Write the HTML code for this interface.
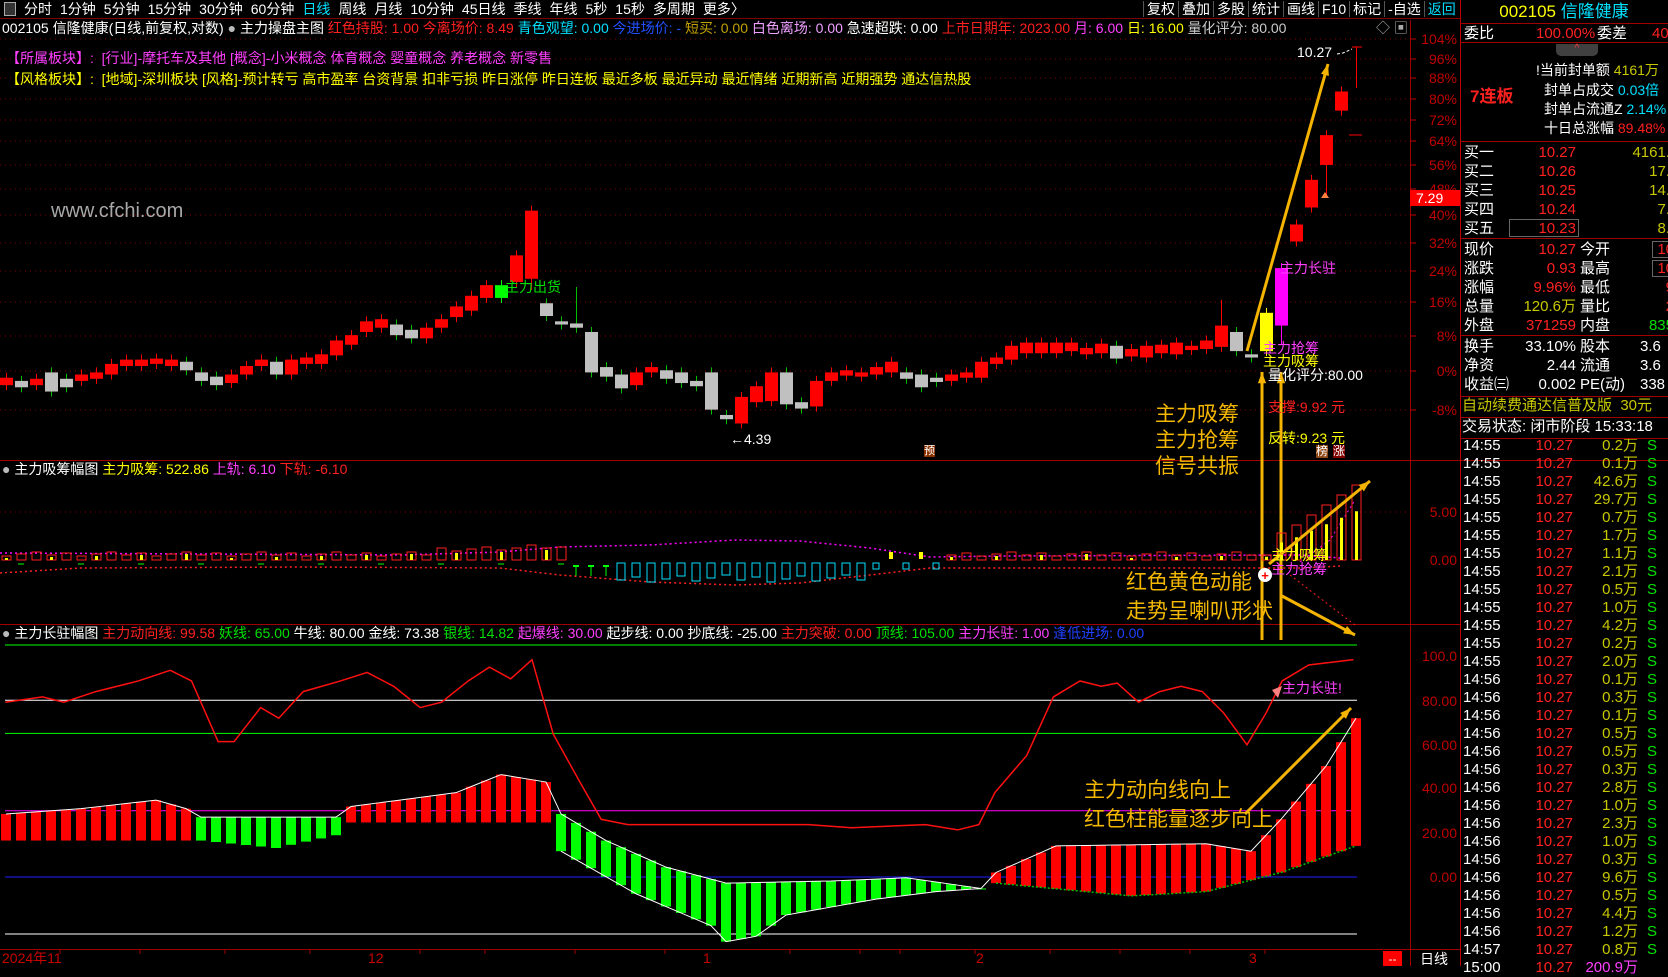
<!DOCTYPE html>
<html><head><meta charset="utf-8">
<style>
*{margin:0;padding:0;box-sizing:border-box}
body{background:#000;width:1668px;height:966px;overflow:hidden;position:relative;font-family:"Liberation Sans","Noto Sans CJK SC",sans-serif;color:#fff}
.t{position:absolute;white-space:nowrap;font-size:14px;line-height:16px}
.r{color:#ff2020}.y{color:#ffff00}.c{color:#00e0ff}.m{color:#ff40ff}.g{color:#00e000}.w{color:#fff}.o{color:#f5b800}.dr{color:#c80000}.ol{color:#c8c800}
.nav span{margin-right:8px}
.ax{position:absolute;left:1411px;width:46px;text-align:right;font-size:14px;line-height:16px;color:#c00000}
.rp{position:absolute;font-size:15px;line-height:18px;white-space:nowrap}
.hl{position:absolute;left:1460px;width:208px;height:1px;background:#a00000}
</style></head><body>
<svg id="s" width="1668" height="966" style="position:absolute;left:0;top:0"></svg>

<div class="t nav" style="left:0;top:0;height:19px;width:1460px;line-height:18px;border-bottom:1px solid #800000">
<span style="display:inline-block;width:12px;height:14px;border:1px solid #aaa;margin:2px 8px 0 4px;vertical-align:top;background:#333"></span><span>分时</span><span>1分钟</span><span>5分钟</span><span>15分钟</span><span>30分钟</span><span>60分钟</span><span class="c">日线</span><span>周线</span><span>月线</span><span>10分钟</span><span>45日线</span><span>季线</span><span>年线</span><span>5秒</span><span>15秒</span><span>多周期</span><span>更多〉</span></div>
<div class="t" style="left:1143px;top:1px;line-height:17px;">
<span style="border-left:1px solid #555;padding:0 3px">复权</span><span style="border-left:1px solid #555;padding:0 3px">叠加</span><span style="border-left:1px solid #555;padding:0 3px">多股</span><span style="border-left:1px solid #555;padding:0 3px">统计</span><span style="border-left:1px solid #555;padding:0 3px">画线</span><span style="border-left:1px solid #555;padding:0 3px">F10</span><span style="border-left:1px solid #555;padding:0 3px">标记</span><span style="border-left:1px solid #555;padding:0 3px">-自选</span><span class="c" style="border-left:1px solid #555;padding:0 3px">返回</span></div>

<div class="t" style="left:2px;top:20px">002105 信隆健康(日线,前复权,对数) <span style="color:#bbb">●</span> 主力操盘主图 <span class="r">红色持股: 1.00</span> <span class="r">今离场价: 8.49</span> <span class="c">青色观望: 0.00</span> <span style="color:#2050ff">今进场价: -</span> <span style="color:#c0a000">短买: 0.00</span> <span style="color:#f0a0ff">白色离场: 0.00</span> 急速超跌: 0.00 <span class="r">上市日期年: 2023.00</span> <span class="m">月: 6.00</span> <span class="y">日: 16.00</span> <span style="color:#ccc">量化评分: 80.00</span></div>
<div class="t" style="left:1376px;top:20px;color:#aaa">◇ ▣</div>
<div class="t m" style="left:6px;top:50px">【所属板块】: &nbsp;[行业]-摩托车及其他 [概念]-小米概念 体育概念 婴童概念 养老概念 新零售</div>
<div class="t y" style="left:6px;top:71px">【风格板块】: &nbsp;[地域]-深圳板块 [风格]-预计转亏 高市盈率 台资背景 扣非亏损 昨日涨停 昨日连板 最近多板 最近异动 最近情绪 近期新高 近期强势 通达信热股</div>

<div class="t" style="left:51px;top:199px;font-size:20px;line-height:24px;color:#a8a8a8">www.cfchi.com</div>
<div class="t g" style="left:505px;top:279px">主力出货</div>
<div class="t w" style="left:730px;top:431px">←4.39</div>
<div class="t w" style="left:1297px;top:44px">10.27</div>
<div class="t m" style="left:1280px;top:260px">主力长驻</div>
<div class="t m" style="left:1263px;top:340px">主力抢筹</div>
<div class="t y" style="left:1263px;top:353px">主力吸筹</div>
<div class="t w" style="left:1268px;top:367px">量化评分:80.00</div>
<div class="t r" style="left:1268px;top:399px">支撑:9.92 元</div>
<div class="t y" style="left:1268px;top:430px">反转:9.23 元</div>
<div class="t" style="left:1316px;top:445px;background:#8b4513;font-size:12px;line-height:13px">榜</div>
<div class="t" style="left:1333px;top:445px;background:#800000;font-size:12px;line-height:13px">涨</div>
<div class="t" style="left:924px;top:445px;background:#8b3000;font-size:11px;line-height:12px">预</div>
<div class="t o" style="left:1155px;top:402px;font-size:21px;line-height:26px">主力吸筹<br>主力抢筹<br>信号共振</div>
<div class="t o" style="left:1126px;top:568px;font-size:21px;line-height:29px">红色黄色动能<br>走势呈喇叭形状</div>
<div class="t o" style="left:1084px;top:776px;font-size:21px;line-height:29px">主力动向线向上<br>红色柱能量逐步向上</div>
<div class="t y" style="left:1271px;top:547px">主力吸筹</div>
<div class="t m" style="left:1271px;top:561px">主力抢筹</div>
<div class="t m" style="left:1282px;top:680px">主力长驻!</div>

<div class="t" style="left:2px;top:461px"><span style="color:#bbb">●</span> 主力吸筹幅图 <span class="y">主力吸筹: 522.86</span> <span class="m">上轨: 6.10</span> <span class="r">下轨: -6.10</span></div>
<div class="t" style="left:2px;top:625px"><span style="color:#bbb">●</span> 主力长驻幅图 <span class="r">主力动向线: 99.58</span> <span class="g">妖线: 65.00</span> 牛线: 80.00 金线: 73.38 <span class="g">银线: 14.82</span> <span class="m">起爆线: 30.00</span> 起步线: 0.00 抄底线: -25.00 <span class="r">主力突破: 0.00</span> <span class="g">顶线: 105.00</span> <span class="m">主力长驻: 1.00</span> <span style="color:#2040ff">逢低进场: 0.00</span></div>

<div class="ax" style="top:31px">104%</div><div class="ax" style="top:51px">96%</div><div class="ax" style="top:70px">88%</div><div class="ax" style="top:91px">80%</div><div class="ax" style="top:112px">72%</div><div class="ax" style="top:133px">64%</div><div class="ax" style="top:157px">56%</div><div class="ax" style="top:181px">48%</div><div class="ax" style="top:207px">40%</div><div class="ax" style="top:235px">32%</div><div class="ax" style="top:263px">24%</div><div class="ax" style="top:294px">16%</div><div class="ax" style="top:328px">8%</div><div class="ax" style="top:363px">0%</div><div class="ax" style="top:402px">-8%</div>
<div class="t" style="left:1410px;top:190px;width:50px;background:#ff0000;color:#fff;padding-left:6px">7.29</div>
<div class="ax" style="top:504px">5.00</div><div class="ax" style="top:552px">0.00</div>
<div class="ax" style="top:648px">100.0</div><div class="ax" style="top:693px">80.00</div><div class="ax" style="top:737px">60.00</div><div class="ax" style="top:780px">40.00</div><div class="ax" style="top:825px">20.00</div><div class="ax" style="top:869px">0.00</div>

<div class="t dr" style="left:2px;top:950px">2024年11</div>
<div class="t dr" style="left:368px;top:950px">12</div>
<div class="t dr" style="left:703px;top:950px">1</div>
<div class="t dr" style="left:976px;top:950px">2</div>
<div class="t dr" style="left:1249px;top:950px">3</div>
<div class="t" style="left:1383px;top:951px;width:19px;height:15px;background:#ff0000;text-align:center;font-size:12px">--</div>
<div class="t w" style="left:1420px;top:951px">日线</div>

<div class="rp" style="left:1460px;top:1px;width:208px;text-align:center;font-size:17px;line-height:22px"><span class="y">002105</span> <span class="c">信隆健康</span></div>
<div class="rp" style="left:1464px;top:25px"><span class="w">委比</span></div>
<div class="rp r" style="left:1536px;top:25px">100.00%</div>
<div class="rp w" style="left:1597px;top:25px">委差</div>
<div class="rp r" style="left:1652px;top:25px">40</div>
<div class="t" style="left:1556px;top:44px;width:42px;height:12px;background:#404040;border-radius:0 0 5px 5px;color:#ff4040;font-size:10px;line-height:10px;text-align:center">^</div>
<div class="rp r" style="left:1470px;top:87px;font-size:17px;line-height:20px;font-weight:bold">7连板</div>
<div class="rp" style="left:1536px;top:62px;width:132px;font-size:14px;line-height:16px"><span class="w">!当前封单额 </span><span class="ol">4161万</span></div>
<div class="rp" style="left:1544px;top:82px;font-size:14px;line-height:16px"><span class="w">封单占成交 </span><span class="c">0.03倍</span></div>
<div class="rp" style="left:1544px;top:101px;font-size:14px;line-height:16px"><span class="w">封单占流通Z </span><span class="c">2.14%</span></div>
<div class="rp" style="left:1544px;top:120px;font-size:14px;line-height:16px"><span class="w">十日总涨幅 </span><span class="r">89.48%</span></div>

<div class="rp w" style="left:1464px;top:143px;line-height:19px">买一<br>买二<br>买三<br>买四<br>买五</div>
<div class="rp r" style="left:1500px;top:143px;width:76px;text-align:right;line-height:19px">10.27<br>10.26<br>10.25<br>10.24<br>10.23</div>
<div class="t" style="left:1509px;top:219px;width:70px;height:18px;border:1px solid #666"></div>
<div class="rp ol" style="left:1590px;top:143px;width:80px;text-align:right;line-height:19px">4161.<br>17.<br>14.<br>7.<br>8.</div>

<div class="rp w" style="left:1464px;top:240px;line-height:19px">现价<br>涨跌<br>涨幅<br>总量<br>外盘</div>
<div class="rp" style="left:1490px;top:240px;width:86px;text-align:right;line-height:19px"><span class="r">10.27</span><br><span class="r">0.93</span><br><span class="r">9.96%</span><br><span class="ol">120.6万</span><br><span class="r">371259</span></div>
<div class="rp w" style="left:1580px;top:240px;line-height:19px">今开<br>最高<br>最低<br>量比<br>内盘</div>
<div class="rp" style="left:1634px;top:240px;width:40px;text-align:right;line-height:19px"><span class="r">10</span><br><span class="r">10</span><br><span class="r">9</span><br><span class="r">2</span><br><span class="g">835</span></div>
<div class="t" style="left:1652px;top:241px;width:20px;height:17px;border:1px solid #666"></div>
<div class="t" style="left:1652px;top:260px;width:20px;height:17px;border:1px solid #666"></div>

<div class="rp w" style="left:1464px;top:337px;line-height:19px">换手<br>净资<br>收益㈢</div>
<div class="rp w" style="left:1490px;top:337px;width:86px;text-align:right;line-height:19px">33.10%<br>2.44<br>0.002</div>
<div class="rp w" style="left:1580px;top:337px;line-height:19px">股本<br>流通<br>PE(动)</div>
<div class="rp w" style="left:1640px;top:337px;line-height:19px">3.6<br>3.6<br>338</div>
<div class="rp ol" style="left:1462px;top:397px">自动续费通达信普及版 &nbsp;30元</div>
<div class="rp w" style="left:1462px;top:418px">交易状态: 闭市阶段 15:33:18</div>

<div id="ticks"></div>

<div class="hl" style="top:23px"></div><div class="hl" style="top:42px"></div><div class="hl" style="top:141px"></div><div class="hl" style="top:238px"></div><div class="hl" style="top:335px"></div><div class="hl" style="top:396px"></div><div class="hl" style="top:417px"></div><div class="hl" style="top:438px"></div>

<script>
const S=1.064;let h='';
function L(x1,y1,x2,y2,c,w,d){h+=`<line x1="${x1}" y1="${y1}" x2="${x2}" y2="${y2}" stroke="${c}" stroke-width="${w||1}" ${d?'stroke-dasharray="'+d+'"':''}/>`;}
function R(x,y,w,hh,f,s){h+=`<rect x="${x}" y="${y}" width="${w}" height="${Math.max(hh,1)}" fill="${f||'none'}" ${s?'stroke="'+s+'"':''}/>`;}
function P(pts,c,w,d){h+=`<polyline points="${pts.map(p=>p.join(',')).join(' ')}" fill="none" stroke="${c}" stroke-width="${w||1}" ${d?'stroke-dasharray="'+d+'"':''}/>`;}
function A(x1,y1,x2,y2,c,w){L(x1,y1,x2,y2,c,w);const a=Math.atan2(y2-y1,x2-x1),s=12;h+=`<polygon points="${x2},${y2} ${x2-s*Math.cos(a-0.35)},${y2-s*Math.sin(a-0.35)} ${x2-s*Math.cos(a+0.35)},${y2-s*Math.sin(a+0.35)}" fill="${c}"/>`;}
[39,59,78,99,120,141,165,189,215,243,271,302,336,371,410].forEach(y=>{L(0,y,1410,y,'#7a0000',1,'1 4');L(1410,y,1416,y,'#c00000');});
L(0,512,1410,512,'#7a0000',1,'1 4');
L(0,460.5,1668,460.5,'#a00000');L(0,624.5,1460,624.5,'#a00000');L(0,949.5,1460,949.5,'#a00000');
L(1410.5,20,1410.5,966,'#a00000');L(1460.5,0,1460.5,966,'#c00000');
[60,140,225,310,420,485,575,665,790,860,900,975,1050,1120,1190,1265].forEach(x=>L(x,950,x,954,'#a00000'));
const C=[[355,362,'r'],[358,364,'g'],[356,362,'r'],[350,368,'g'],[356,364,'g'],[352,358,'r'],[350,356,'r'],[342,352,'r'],[338,344,'r'],[338,344,'r'],[337,342,'r'],[338,344,'r'],[340,348,'g'],[350,358,'g'],[354,362,'g'],[352,360,'r'],[344,352,'r'],[338,344,'r'],[340,352,'g'],[338,352,'r'],[336,342,'r'],[333,342,'r'],[320,334,'r'],[315,324,'r'],[302,312,'r'],[300,308,'r'],[305,315,'g'],[310,318,'g'],[308,318,'r'],[300,308,'r'],[288,298,'r'],[278,292,'r'],[268,280,'r'],[268,280,'G'],[240,265,'r'],[198,262,'r'],[285,297,'g'],[302,305,'g'],[304,308,'g'],[312,350,'g'],[345,354,'g'],[352,365,'g'],[350,362,'r'],[345,350,'r'],[348,356,'g'],[350,360,'g'],[358,363,'g'],[350,385,'g'],[390,394,'g'],[373,398,'r'],[363,378,'r'],[350,377,'r'],[350,380,'g'],[378,384,'g'],[358,382,'r'],[350,358,'r'],[348,353,'r'],[350,354,'r'],[345,352,'r'],[340,350,'r'],[350,356,'g'],[352,364,'g'],[355,359,'g'],[352,358,'r'],[350,355,'r'],[340,355,'r'],[336,342,'r'],[325,338,'r'],[322,332,'r'],[322,332,'r'],[322,332,'r'],[322,330,'r'],[327,333,'r'],[323,332,'r'],[325,337,'g'],[328,335,'r'],[325,336,'r'],[324,332,'r'],[322,333,'r'],[325,329,'r'],[320,328,'r'],[306,326,'r'],[312,330,'g'],[333,336,'g'],[294,330,'y'],[252,306,'m'],[211,227,'r'],[169,195,'r'],[127,155,'r'],[86,104,'r']];
const col={r:'#ff0000',g:'#c0c0c0',G:'#00ff00',y:'#ffff00',m:'#ff00ff'};
C.forEach((c,i)=>{const x=6+15*i;let t=c[0]*S,b=c[1]*S;let wt=t-5,wb=b+5;
 if(i==35)wb=290;if(i==38)wt=287;if(i==85)wb=345;if(i==88)wb=198;if(i==81)wt=300;
 const wc=(c[2]=='g')?'#00c000':(c[2]=='r'?'#ff0000':col[c[2]]);
 L(x+.5,wt,x+.5,wb,wc);R(x-6,t,13,b-t,col[c[2]]);});
L(1356.5,47,1356.5,88,'#ff0000');L(1352,47,1362,47,'#ff0000');L(1349,135,1362,135,'#ff0000');
h+='<polygon points="1325,192 1321,198 1329,198" fill="#ff8040"/>';
P([[1337,54],[1343,53],[1352,49]],'#fff',1,'3 2');
A(1247,351,1328,64,'#f5b400',3);A(1262,640,1262,372,'#f5b400',3);A(1281,640,1281,372,'#f5b400',3);
const Z=560;
P([[0,553],[400,555],[500,552],[560,547],[650,545],[735,540],[800,541],[870,548],[930,557],[1000,556],[1300,555],[1340,558]],'#ff00ff',1.5,'2 3');
P([[0,573],[80,568],[300,567],[500,568],[560,575],[650,582],[735,585],[800,583],[870,575],[930,568],[1000,568],[1300,568],[1340,566]],'#ff2020',1.5,'2 3');
P([[1300,562],[1330,540],[1355,500]],'#ff00ff',1,'2 3');P([[1290,575],[1355,625]],'#ff2020',1,'2 3');
for(let i=0;i<91;i++){const x=6+15*i;
 if(i<38||(i>=63&&i<84)){let hh=4+(i*7%5)+(i>28&&i<38?5:0);if(i==35)hh=15;if(i==36)hh=12;R(x-4,Z-hh,9,hh,'none','#ff2020');if(i%3==0)R(x-1,Z-hh+2,3,hh-2,'#ffff00');if(i%4==1&&i<38){L(x-3,Z+4,x+3,Z+4,'#00ff00');}}
 else if(i<58){if(i<41){L(x-3,Z+6,x+3,Z+6,'#00ff00',2);L(x,Z+6,x,Z+16,'#00ff00');}else{let hh=12+((i*5)%8);R(x-4,Z+3,8,hh,'none','#00e0ff');}}
 else if(i<63){if(i%2){R(x-2,Z-8,4,7,'#ffff00')}else R(x-3,Z+3,6,6,'none','#00e0ff');}
 else{const tp=[555,533,525,515,505,495,485][i-84];R(x-4,tp,9,Z-tp,'none','#ff2020');R(x-1,tp+(Z-tp)*0.35,3,(Z-tp)*0.65,'#ffff00');}}
h+='<circle cx="1265" cy="575" r="7" fill="#fff"/><text x="1265" y="580" fill="#ff0000" font-size="13" text-anchor="middle" font-weight="bold">+</text>';
A(1269,564,1370,481,'#f5b400',3);A(1282,596,1355,635,'#f5b400',3);
const V=v=>877-v*2.21;
L(5,645,1357,645,'#00ff00');L(5,V(80),1357,V(80),'#fff');L(5,V(65),1357,V(65),'#00ff00');L(5,V(30),1357,V(30),'#ff00ff');L(5,V(0),1357,V(0),'#2020ff');L(5,934,1357,934,'#fff');
function I(k,i){for(let j=0;j<k.length-1;j++){if(i<=k[j+1][0]){const a=k[j],b=k[j+1];return (a[1]+(b[1]-a[1])*(i-a[0])/(b[0]-a[0]))*S;}}return k[k.length-1][1]*S;}
const TP=[[0,765],[5,760],[10,752],[12,760],[13,768],[22,768],[23,758],[30,745],[33,728],[36,735],[37,765],[40,790],[44,815],[48,830],[55,828],[60,825],[65,835],[66,820],[70,795],[80,793],[83,800],[85,770],[88,720],[90,675]];
const BT=[[0,790],[12,790],[13,790],[18,797],[22,785],[23,773],[36,773],[37,800],[42,840],[47,870],[48,885],[50,880],[52,860],[58,845],[62,838],[65,835],[66,830],[75,842],[80,838],[85,820],[90,795]];
let wt=[],wb=[];
for(let i=0;i<91;i++){const x=6+15*i,t=I(TP,i),b=I(BT,i);const red=(i<=12||(i>=23&&i<=36)||i>=66);R(x-5,t,10,b-t,red?'#ff0000':'#00ff00');wt.push([x,t]);wb.push([x,b]);}
P(wt,'#fff',1);P(wb.slice(37,66),'#fff',1);P(wb.slice(66),'#00c000',1.5,'2 2');
const RL=[[5,660],[40,655],[60,660],[90,650],[130,640],[160,630],[180,640],[205,697],[220,697],[245,665],[262,675],[285,650],[320,640],[345,632],[370,645],[395,665],[415,660],[440,640],[460,627],[480,638],[500,620],[520,690],[545,735],[565,770],[590,775],[650,775],[760,775],[800,778],[870,775],[900,780],[920,775],[935,745],[965,710],[990,655],[1015,640],[1035,645],[1050,642],[1070,660],[1090,650],[1110,645],[1130,650],[1150,670],[1172,700],[1190,670],[1205,640],[1230,625],[1272,620]];
P(RL.map(p=>[p[0]*S,p[1]*S]),'#ff1010',1.5);
h+='<polygon points="1272,690 1282,686 1278,698" fill="#ff8080"/>';
A(1245,814,1351,708,'#f5b400',3);
document.getElementById('s').innerHTML=h;
const vols=['0.2','0.1','42.6','29.7','0.7','1.7','1.1','2.1','0.5','1.0','4.2','0.2','2.0','0.1','0.3','0.1','0.5','0.5','0.3','2.8','1.0','2.3','1.0','0.3','9.6','0.5','4.4','1.2','0.8'];
let th='';vols.forEach((v,i)=>{const y=437+i*18;const tm=i<13?'14:55':(i<28?'14:56':'14:57');
th+=`<div class="rp w" style="left:1463px;top:${y}px">${tm}</div><div class="rp r" style="left:1510px;top:${y}px;width:63px;text-align:right">10.27</div><div class="rp ol" style="left:1570px;top:${y}px;width:68px;text-align:right">${v}万</div><div class="rp g" style="left:1647px;top:${y}px">S</div>`;});
th+=`<div class="rp w" style="left:1463px;top:959px">15:00</div><div class="rp r" style="left:1510px;top:959px;width:63px;text-align:right">10.27</div><div class="rp m" style="left:1570px;top:959px;width:68px;text-align:right">200.9万</div>`;
document.getElementById('ticks').innerHTML=th;
</script>
</body></html>
